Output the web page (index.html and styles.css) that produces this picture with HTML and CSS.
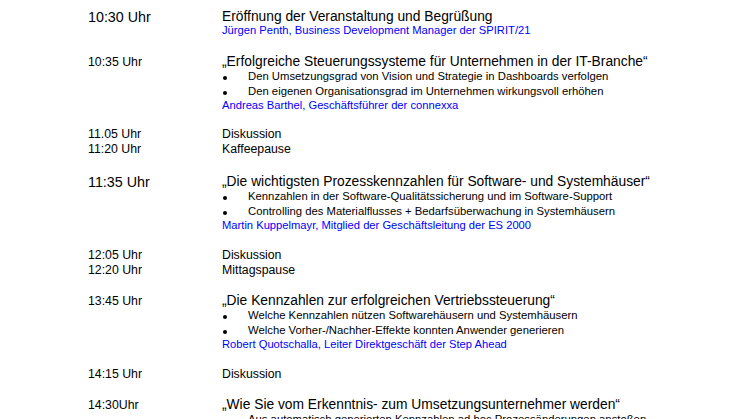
FILE: index.html
```html
<!DOCTYPE html>
<html lang="de">
<head>
<meta charset="utf-8">
<link rel="stylesheet" href="styles.css">
</head>
<body>
<div class="agenda">
  <div class="item first">
    <div class="time big">10:30 Uhr</div>
    <div class="content">
      <div class="title">Eröffnung der Veranstaltung und Begrüßung</div>
      <div class="speaker">Jürgen Penth, Business Development Manager der SPIRIT/21</div>
    </div>
  </div>
  <div class="item wide">
    <div class="time">10:35 Uhr</div>
    <div class="content">
      <div class="title">„Erfolgreiche Steuerungssysteme für Unternehmen in der IT-Branche“</div>
      <ul class="points">
        <li>Den Umsetzungsgrad von Vision und Strategie in Dashboards verfolgen</li>
        <li>Den eigenen Organisationsgrad im Unternehmen wirkungsvoll erhöhen</li>
      </ul>
      <div class="speaker">Andreas Barthel, Geschäftsführer der connexxa</div>
    </div>
  </div>
  <div class="item simple narrow">
    <div class="time">11.05 Uhr</div>
    <div class="content"><div class="plain">Diskussion</div></div>
  </div>
  <div class="item simple tight">
    <div class="time">11:20 Uhr</div>
    <div class="content"><div class="plain">Kaffeepause</div></div>
  </div>
  <div class="item wide">
    <div class="time big">11:35 Uhr</div>
    <div class="content">
      <div class="title">„Die wichtigsten Prozesskennzahlen für Software- und Systemhäuser“</div>
      <ul class="points">
        <li>Kennzahlen in der Software-Qualitätssicherung und im Software-Support</li>
        <li>Controlling des Materialflusses + Bedarfsüberwachung in Systemhäusern</li>
      </ul>
      <div class="speaker">Martin Kuppelmayr, Mitglied der Geschäftsleitung der ES 2000</div>
    </div>
  </div>
  <div class="item simple">
    <div class="time">12:05 Uhr</div>
    <div class="content"><div class="plain">Diskussion</div></div>
  </div>
  <div class="item simple tight">
    <div class="time">12:20 Uhr</div>
    <div class="content"><div class="plain">Mittagspause</div></div>
  </div>
  <div class="item">
    <div class="time">13:45 Uhr</div>
    <div class="content">
      <div class="title">„Die Kennzahlen zur erfolgreichen Vertriebssteuerung“</div>
      <ul class="points">
        <li>Welche Kennzahlen nützen Softwarehäusern und Systemhäusern</li>
        <li>Welche Vorher-/Nachher-Effekte konnten Anwender generieren</li>
      </ul>
      <div class="speaker">Robert Quotschalla, Leiter Direktgeschäft der Step Ahead</div>
    </div>
  </div>
  <div class="item simple">
    <div class="time">14:15 Uhr</div>
    <div class="content"><div class="plain">Diskussion</div></div>
  </div>
  <div class="item">
    <div class="time">14:30Uhr</div>
    <div class="content">
      <div class="title">„Wie Sie vom Erkenntnis- zum Umsetzungsunternehmer werden“</div>
      <ul class="points">
        <li>Aus automatisch generierten Kennzahlen ad hoc Prozessänderungen anstoßen</li>
      </ul>
    </div>
  </div>
</div>
</body>
</html>
```

FILE: styles.css
```css
html, body {
  margin: 0;
  padding: 0;
  background: #ffffff;
}
body {
  font-family: "Liberation Sans", Arial, sans-serif;
  color: #000000;
  overflow: hidden;
  height: 419px;
}
.agenda {
  padding: 10px 0 0 88px;
}
.item {
  display: grid;
  grid-template-columns: 134px 1fr;
  margin-top: 16px;
}
.item.first {
  margin-top: 0;
}
.item.wide {
  margin-top: 18px;
}
.item.narrow {
  margin-top: 15px;
}
.item.tight {
  margin-top: 0;
}
.time {
  font-size: 12.3px;
  line-height: 14px;
}
.time.big {
  font-size: 14.3px;
}
.item.simple .time {
  line-height: 15px;
}
.title {
  font-size: 13.8px;
  line-height: 14px;
}
.plain {
  font-size: 12.3px;
  line-height: 15px;
}
.speaker {
  font-size: 11.2px;
  line-height: 13px;
  color: #0000ff;
}
.points {
  list-style: none;
  margin: 0;
  padding: 0;
}
.points li {
  position: relative;
  font-size: 11.3px;
  line-height: 15px;
  padding-left: 26px;
}
.points li::before {
  content: "";
  position: absolute;
  left: 1px;
  top: 7px;
  width: 4px;
  height: 4px;
  border-radius: 50%;
  background: #000;
}
```
